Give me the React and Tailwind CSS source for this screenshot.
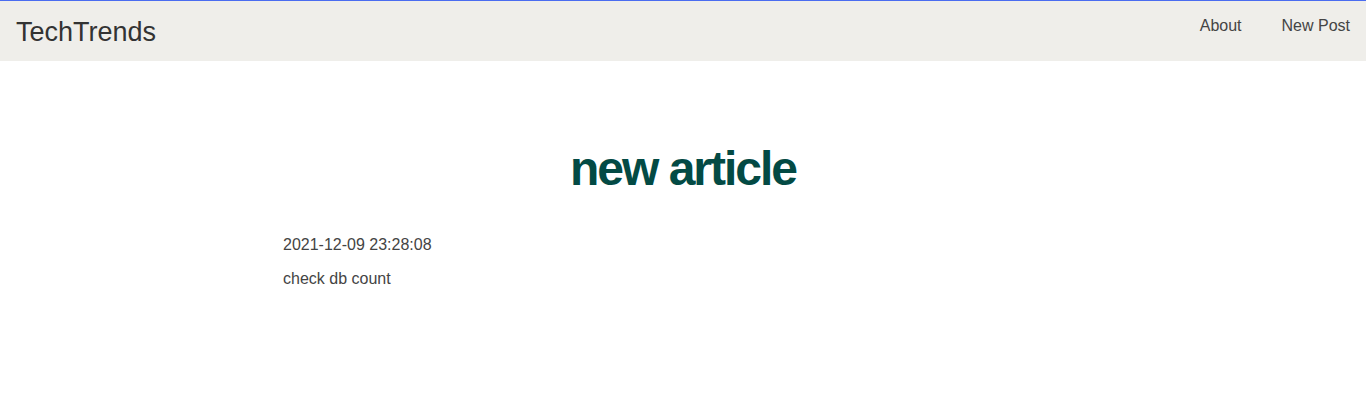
export default function App() {
  return (
    <div className="min-h-screen bg-white font-['Liberation_Sans',Arial,sans-serif] text-[#333]">
      {/* Top bar */}
      <nav className="flex items-center justify-between border-t border-[#4a6cf0] bg-[#efeeea] h-[61px] px-4">
        <a className="text-[27px] text-[#333] leading-none mt-[2px]">TechTrends</a>
        <div className="flex items-center -mt-[10px]">
          <a className="px-5 text-base text-[#444]">About</a>
          <a className="pl-5 text-base text-[#444]">New Post</a>
        </div>
      </nav>

      {/* Post */}
      <main className="max-w-[800px] mx-auto pt-[84px]">
        <h1 className="text-center text-[48px] font-bold tracking-[-2px] leading-none text-[#034a44]">
          new article
        </h1>
        <p className="mt-[40px] text-base text-[#444]">2021-12-09 23:28:08</p>
        <p className="mt-[10px] text-base text-[#444]">check db count</p>
      </main>
    </div>
  );
}
